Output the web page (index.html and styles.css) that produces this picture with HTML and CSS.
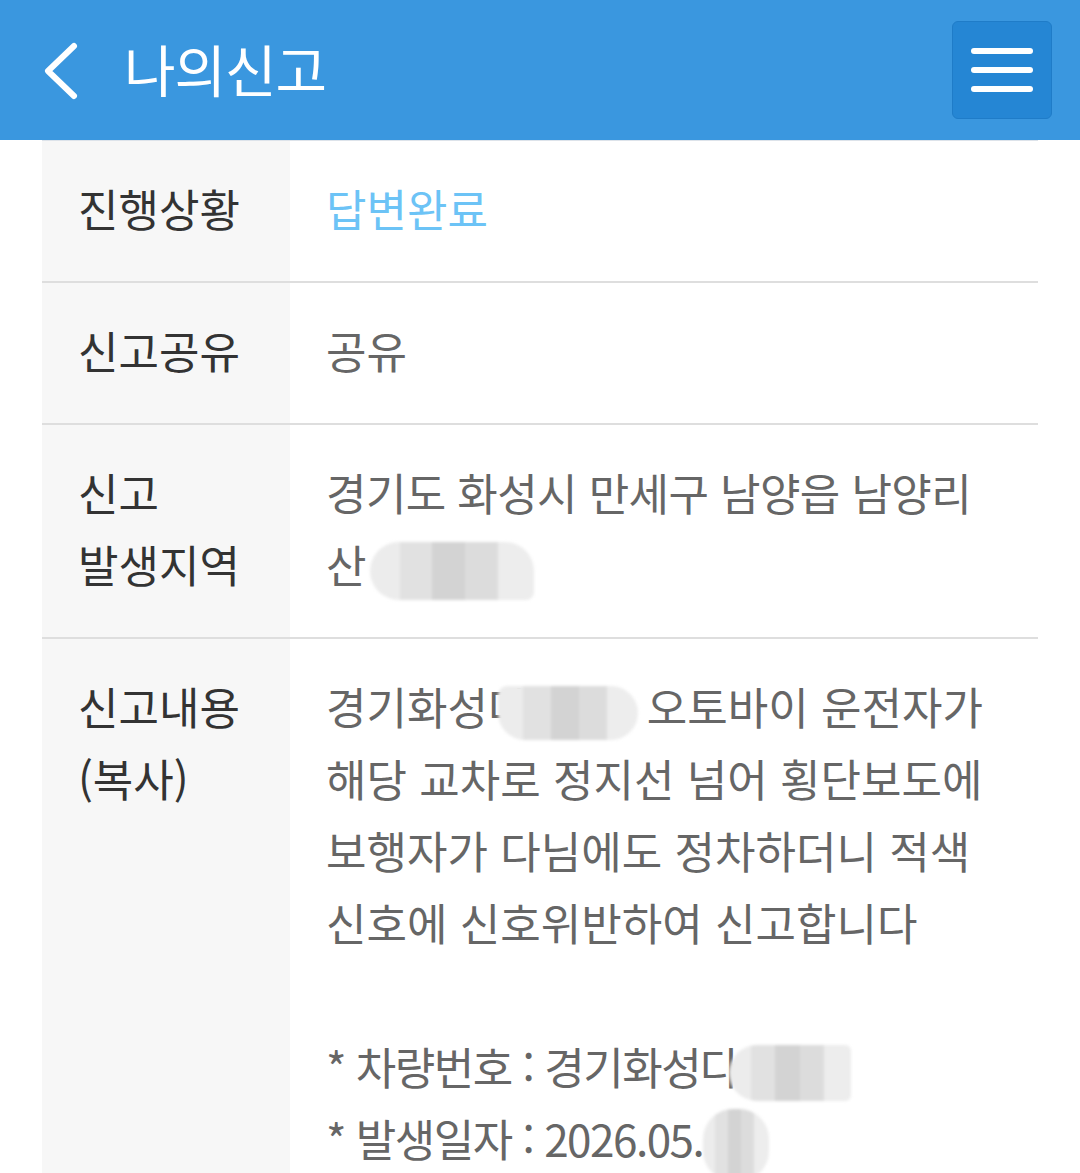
FILE: index.html
```html
<!DOCTYPE html>
<html lang="ko">
<head>
<meta charset="utf-8">
<title>나의신고</title>
<link rel="stylesheet" href="styles.css">
</head>
<body>
<header class="topbar">
  <button class="back" aria-label="뒤로">
    <svg viewBox="0 0 44 66" width="44" height="66"><path d="M34 8 L8 33 L34 58" fill="none" stroke="#fff" stroke-width="6" stroke-linecap="round" stroke-linejoin="round"/></svg>
  </button>
  <h1 class="title">나의신고</h1>
  <button class="menu" aria-label="메뉴">
    <span class="bar"></span><span class="bar"></span><span class="bar"></span>
  </button>
</header>
<main class="detail">
  <div class="row">
    <div class="label">진행상황</div>
    <div class="value status">답변완료</div>
  </div>
  <div class="row">
    <div class="label">신고공유</div>
    <div class="value">공유</div>
  </div>
  <div class="row">
    <div class="label">신고<br>발생지역</div>
    <div class="value"><span class="addr">경기도 화성시 만세구 남양읍 남양리</span><br>산<span class="mosaic m-addr"></span></div>
  </div>
  <div class="row">
    <div class="label">신고내용<br>(복사)</div>
    <div class="value">경기화성다<span class="mosaic m-plate1"></span> 오토바이 운전자가<br>해당 교차로 정지선 넘어 횡단보도에<br>보행자가 다님에도 정차하더니 적색<br>신호에 신호위반하여 신고합니다<br><br><span class="note">* 차량번호 : 경기화성다</span><span class="mosaic m-plate2"></span><br><span class="note">* 발생일자 : 2026.05.</span><span class="mosaic m-date"></span></div>
  </div>
</main>
</body>
</html>
```
FILE: styles.css
```css
html, body {
  margin: 0;
  padding: 0;
  background: #fff;
  font-family: "Noto Sans CJK KR", "Noto Sans", sans-serif;
}

.topbar {
  height: 140px;
  background: #3a97df;
  display: flex;
  align-items: center;
  padding: 0 28px 0 40px;
  box-sizing: border-box;
}

.back {
  background: none;
  border: 0;
  padding: 0;
  width: 44px;
  height: 66px;
  display: flex;
  margin-top: 2px;
}

.title {
  margin: -4px 0 0 40px;
  color: #fff;
  font-size: 56px;
  font-weight: 400;
  letter-spacing: -1px;
  line-height: 1;
  flex: 1;
}

.menu {
  width: 100px;
  height: 98px;
  background: #2586d4;
  border: 1px solid #1f7cc8;
  border-radius: 6px;
  box-sizing: border-box;
  display: flex;
  flex-direction: column;
  align-items: center;
  justify-content: center;
  gap: 13px;
  padding: 0;
}

.bar {
  display: block;
  width: 62px;
  height: 6px;
  border-radius: 3px;
  background: #fff;
}

.detail {
  margin: 0 42px;
  border-top: 1px solid #dde3ea;
}

.row {
  display: grid;
  grid-template-columns: 248px 1fr;
  border-bottom: 2px solid #dedede;
}

.label,
.value {
  font-size: 44px;
  line-height: 72px;
  padding: 31px 0 37px 36px;
  white-space: nowrap;
}

.label {
  background: #f7f7f7;
  color: #333;
}

.value {
  color: #666;
}

.status {
  color: #6cc3f6;
}

.addr {
  letter-spacing: -0.6px;
}

.note {
  letter-spacing: -1.5px;
}

.mosaic {
  display: inline-block;
  vertical-align: middle;
  border-radius: 28px;
  filter: blur(1.5px);
  background:
    linear-gradient(90deg, #ececec 0 18%, #e1e1e1 18% 38%, #d3d3d3 38% 58%, #dcdcdc 58% 78%, #ededed 78% 100%);
}

.m-addr {
  width: 164px;
  height: 58px;
  margin-left: 4px;
  border-radius: 30px 30px 8px 30px;
}

.m-plate1 {
  width: 140px;
  height: 54px;
  margin-left: -30px;
  margin-right: -4px;
  border-radius: 10px 30px 30px 30px;
}

.m-plate2 {
  width: 122px;
  height: 56px;
  margin-left: -10px;
  border-radius: 30px 6px 6px 30px;
}

.m-date {
  width: 66px;
  height: 72px;
  margin-left: 0;
  border-radius: 30px;
}
```
